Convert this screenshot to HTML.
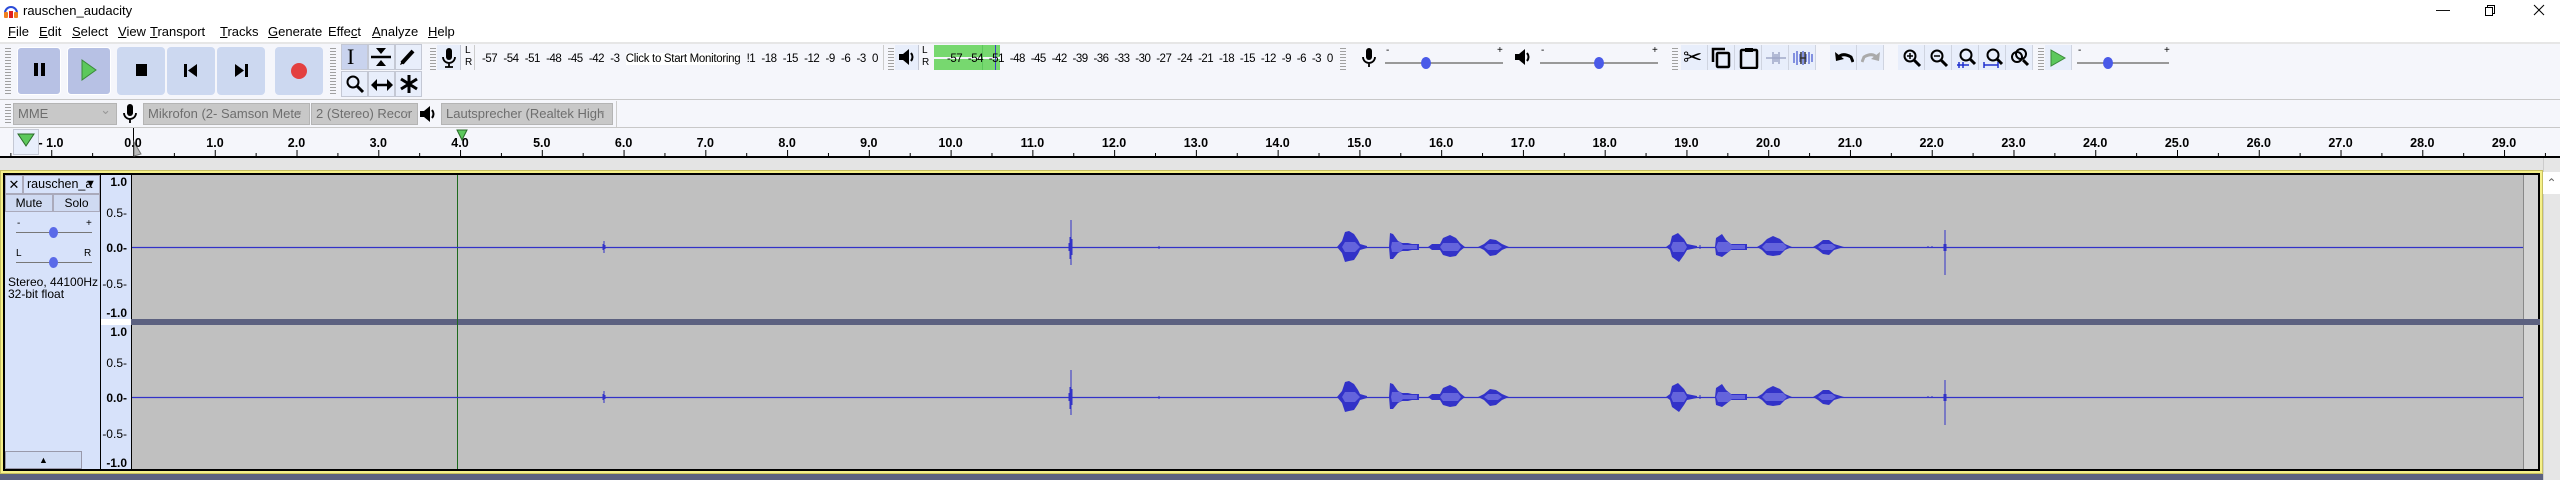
<!DOCTYPE html>
<html><head><meta charset="utf-8">
<style>
*{margin:0;padding:0;box-sizing:border-box}
body{width:2560px;height:480px;overflow:hidden;background:#fff;font-family:"Liberation Sans",sans-serif;position:relative}
.a{position:absolute}
.menu span{position:absolute;top:24px;font-size:13px;color:#000}
.tb{background:#f5f6fb}
.btn{position:absolute;background:#ccd8f0;border-radius:4px}
.btn.dn{background:#b7c1e4;border:1px solid #fff;box-shadow:inset 0 0 0 2px #b7c1e4}
.tool{position:absolute;width:27px;height:26px;background:#e8eefb;border:1px solid #c4c8d4}
.grip{position:absolute;width:6px;background:repeating-linear-gradient(#f5f6fb 0 2px,#a0a0a0 2px 3px)}
.dd{position:absolute;top:103px;height:22px;background:#c8c8c8;border:1px solid #b4b4b4;color:#6e6e6e;font-size:13px;line-height:20px;padding-left:4px;white-space:nowrap;overflow:hidden}
.dd:after{content:"⌄";position:absolute;right:5px;top:-4px;color:#999}
.eb{position:absolute;top:45px;width:27px;height:25px;background:#e8eefb;border-right:1px solid #cfd4e0}
.small{font-size:10px}
.mt{position:absolute;top:53px;display:flex;justify-content:space-between;font-size:11.5px;letter-spacing:-0.5px;white-space:nowrap}
</style></head><body>
<svg class="a" style="left:3px;top:3px" width="16" height="16" viewBox="0 0 16 16"><path d="M2 10 A6 6 0 0 1 14 10" stroke="#2b4bd8" stroke-width="2" fill="none"/><rect x="1" y="9" width="4" height="6" rx="1" fill="#f08020"/><rect x="11" y="9" width="4" height="6" rx="1" fill="#f08020"/><rect x="6" y="8" width="4" height="7" fill="#e02020"/></svg>
<div class="a" style="left:23px;top:3px;font-size:13px">rauschen_audacity</div>
<div class="a" style="left:2436px;top:1px;font-size:14px">—</div>
<svg class="a" style="left:2484px;top:4px" width="12" height="12"><rect x="1.5" y="3.5" width="7" height="8" fill="none" stroke="#000"/><path d="M3.5 3.5V1.5H10.5V9.5H8.5" fill="none" stroke="#000"/></svg>
<svg class="a" style="left:2533px;top:4px" width="12" height="12"><path d="M1 1L11 11M11 1L1 11" stroke="#000"/></svg>
<div class="menu">
<span style="left:8px"><u>F</u>ile</span><span style="left:39px"><u>E</u>dit</span><span style="left:72px"><u>S</u>elect</span><span style="left:118px"><u>V</u>iew</span><span style="left:150px"><u>T</u>ransport</span><span style="left:220px"><u>T</u>racks</span><span style="left:268px"><u>G</u>enerate</span><span style="left:328px">Effe<u>c</u>t</span><span style="left:372px"><u>A</u>nalyze</span><span style="left:428px"><u>H</u>elp</span>
</div>
<div class="a tb" style="left:0;top:42px;width:2560px;height:86px;border-top:2px solid #e6e6e6"></div>
<div class="a" style="left:0;top:99px;width:2560px;height:1px;background:#c8c8c8"></div>
<div class="a" style="left:0;top:127px;width:2560px;height:1px;background:#c8c8c8"></div>
<div class="grip" style="left:5px;top:46px;height:50px"></div>
<div class="btn dn" style="left:17px;top:47px;width:44px;height:48px"></div>
<div class="btn dn" style="left:67px;top:47px;width:44px;height:48px"></div>
<div class="btn" style="left:117px;top:47px;width:48px;height:48px"></div>
<div class="btn" style="left:167px;top:47px;width:48px;height:48px"></div>
<div class="btn" style="left:217px;top:47px;width:48px;height:48px"></div>
<div class="btn" style="left:275px;top:47px;width:48px;height:48px"></div>
<div class="a" style="left:34px;top:63px;width:4px;height:13px;background:#000"></div>
<div class="a" style="left:41px;top:63px;width:4px;height:13px;background:#000"></div>
<svg class="a" style="left:81px;top:59px" width="16" height="22"><path d="M1 1L15 11L1 21Z" fill="#5cc85c" stroke="#3a8a3a"/></svg>
<div class="a" style="left:136px;top:64px;width:11px;height:12px;background:#000"></div>
<svg class="a" style="left:184px;top:64px" width="14" height="13"><rect x="0" y="0" width="3" height="13"/><path d="M13 0L4 6.5L13 13Z"/></svg>
<svg class="a" style="left:235px;top:64px" width="14" height="13"><path d="M0 0L9 6.5L0 13Z"/><rect x="10" y="0" width="3" height="13"/></svg>
<div class="a" style="left:291px;top:63px;width:16px;height:16px;border-radius:50%;background:#e34040"></div>
<div class="grip" style="left:330px;top:46px;height:50px"></div>
<div class="tool" style="left:341px;top:44px;background:#c9d3ee"></div><div class="tool" style="left:368px;top:44px"></div><div class="tool" style="left:395px;top:44px"></div>
<div class="tool" style="left:341px;top:71px"></div><div class="tool" style="left:368px;top:71px"></div><div class="tool" style="left:395px;top:71px"></div>
<div class="a" style="left:347px;top:44px;font-size:22px;font-family:'Liberation Serif',serif">I</div>
<svg class="a" style="left:370px;top:47px" width="22" height="20"><path d="M6 1L16 1L11 7Z M6 19L16 19L11 13Z" fill="#000"/><path d="M1 10H21" stroke="#000" stroke-width="2.5"/></svg>
<svg class="a" style="left:399px;top:48px" width="18" height="18"><path d="M3 15L14 3" stroke="#000" stroke-width="4"/><path d="M1 17L3 12L6 15Z"/></svg>
<svg class="a" style="left:345px;top:74px" width="20" height="20"><circle cx="8" cy="8" r="5.5" fill="none" stroke="#000" stroke-width="2"/><path d="M12 12L18 18" stroke="#000" stroke-width="3"/></svg>
<svg class="a" style="left:371px;top:78px" width="22" height="14"><path d="M4 7H18" stroke="#000" stroke-width="2.5"/><path d="M0 7L6 1V13Z M22 7L16 1V13Z"/></svg>
<svg class="a" style="left:399px;top:74px" width="20" height="20"><path d="M10 1V19M2 5L18 15M18 5L2 15" stroke="#000" stroke-width="3"/></svg>
<!-- record meter -->
<div class="grip" style="left:430px;top:46px;height:24px"></div>
<div class="a" style="left:437px;top:45px;width:24px;height:25px;background:#e8eefb;border-right:1px solid #c4c8d4"></div>
<svg class="a" style="left:442px;top:48px" width="14" height="20"><rect x="4" y="0" width="6" height="12" rx="3"/><path d="M1 9A6 6 0 0 0 13 9M7 15V19M3 19H11" stroke="#000" stroke-width="1.8" fill="none"/></svg>
<div class="a small" style="left:465px;top:45px">L</div><div class="a small" style="left:465px;top:57px">R</div>
<div class="a" style="left:474px;top:45px;width:410px;height:25px;border-left:1px solid #ccc;border-right:1px solid #ccc"></div>
<div class="mt" style="left:482px;width:396px"><span>-57</span><span>-54</span><span>-51</span><span>-48</span><span>-45</span><span>-42</span><span>-3</span><span style="background:#fff;letter-spacing:-0.3px">Click to Start Monitoring</span><span>!1</span><span>-18</span><span>-15</span><span>-12</span><span>-9</span><span>-6</span><span>-3</span><span>0</span></div>
<div class="grip" style="left:888px;top:46px;height:24px"></div>
<!-- play meter -->
<div class="a" style="left:895px;top:45px;width:24px;height:25px;background:#e8eefb;border-right:1px solid #c4c8d4"></div>
<svg class="a" style="left:898px;top:48px" width="18" height="18"><path d="M1 6H5L11 1V17L5 12H1Z"/><path d="M13 5Q16 9 13 13" stroke="#000" stroke-width="2" fill="none"/></svg>
<div class="a small" style="left:922px;top:45px">L</div><div class="a small" style="left:922px;top:57px">R</div>
<div class="a" style="left:934px;top:45px;width:66px;height:25px;background:#77d86f"></div>
<div class="a" style="left:934px;top:57px;width:66px;height:2px;background:#f5f6fb"></div>
<div class="a" style="left:982px;top:45px;width:1px;height:25px;background:#5cc85c"></div>
<div class="a" style="left:995px;top:45px;width:1px;height:25px;background:#4040c8"></div>
<div class="mt" style="left:947px;width:386px"><span>-57</span><span>-54</span><span>-51</span><span>-48</span><span>-45</span><span>-42</span><span>-39</span><span>-36</span><span>-33</span><span>-30</span><span>-27</span><span>-24</span><span>-21</span><span>-18</span><span>-15</span><span>-12</span><span>-9</span><span>-6</span><span>-3</span><span>0</span></div>
<div class="grip" style="left:1340px;top:46px;height:24px"></div>
<!-- mixer -->
<svg class="a" style="left:1362px;top:48px" width="14" height="20"><rect x="4" y="0" width="6" height="12" rx="3"/><path d="M1 9A6 6 0 0 0 13 9M7 15V19" stroke="#000" stroke-width="1.8" fill="none"/></svg>
<div class="a" style="left:1385px;top:62px;width:118px;height:2px;background:#999"></div>
<div class="a small" style="left:1386px;top:45px">-</div><div class="a small" style="left:1497px;top:45px">+</div>
<div class="a" style="left:1421px;top:57px;width:10px;height:12px;border-radius:50%;background:#4a5ae8"></div>
<svg class="a" style="left:1514px;top:48px" width="18" height="18"><path d="M1 6H5L11 1V17L5 12H1Z"/><path d="M13 5Q16 9 13 13" stroke="#000" stroke-width="2" fill="none"/></svg>
<div class="a" style="left:1540px;top:62px;width:118px;height:2px;background:#999"></div>
<div class="a small" style="left:1541px;top:45px">-</div><div class="a small" style="left:1652px;top:45px">+</div>
<div class="a" style="left:1594px;top:57px;width:10px;height:12px;border-radius:50%;background:#4a5ae8"></div>
<div class="grip" style="left:1672px;top:46px;height:24px"></div>
<div class="eb" style="left:1681px"></div><div class="eb" style="left:1708px"></div><div class="eb" style="left:1735px"></div><div class="eb" style="left:1762px"></div><div class="eb" style="left:1789px"></div>
<div class="a" style="left:1683px;top:44px;font-size:23px">✂</div>
<svg class="a" style="left:1711px;top:47px" width="22" height="22"><path d="M2 15V2H14" stroke="#000" stroke-width="2.5" fill="none"/><rect x="6" y="6" width="12" height="14" rx="1" fill="none" stroke="#000" stroke-width="2.5"/></svg>
<svg class="a" style="left:1739px;top:47px" width="20" height="22"><rect x="2" y="3" width="16" height="18" rx="1" fill="none" stroke="#000" stroke-width="2.5"/><rect x="6" y="1" width="8" height="4" fill="#000"/></svg>
<svg class="a" style="left:1765px;top:49px" width="22" height="18"><path d="M1 9H21M8 3V15M14 3V15M10 5V13M12 5V13" stroke="#a0a8c8" stroke-width="1.5"/></svg>
<svg class="a" style="left:1792px;top:49px" width="22" height="18"><path d="M2 4V14M5 2V16M8 5V13M11 2V16M14 5V13M17 3V15M20 5V13" stroke="#6070d8" stroke-width="1.5"/><path d="M8 9H14M9 3V15M13 3V15" stroke="#333" stroke-width="1.5"/></svg>
<div class="eb" style="left:1830px"></div><div class="eb" style="left:1857px"></div>
<svg class="a" style="left:1834px;top:48px" width="20" height="18"><path d="M4 10Q8 4 17 9L19 14" stroke="#000" stroke-width="3" fill="none"/><path d="M1 4L2 13L10 11Z"/></svg>
<svg class="a" style="left:1861px;top:48px" width="20" height="18"><path d="M16 10Q12 4 3 9L1 14" stroke="#aaa" stroke-width="3" fill="none"/><path d="M19 4L18 13L10 11Z" fill="#aaa"/></svg>
<div class="eb" style="left:1898px"></div><div class="eb" style="left:1925px"></div><div class="eb" style="left:1952px"></div><div class="eb" style="left:1979px"></div><div class="eb" style="left:2006px"></div>
<svg class="a" style="left:1902px;top:48px" width="20" height="20"><circle cx="8" cy="8" r="5.5" fill="none" stroke="#000" stroke-width="2"/><path d="M12 12L18 18" stroke="#000" stroke-width="3"/><path d="M5 8H11M8 5V11" stroke="#000" stroke-width="1.5"/></svg>
<svg class="a" style="left:1929px;top:48px" width="20" height="20"><circle cx="8" cy="8" r="5.5" fill="none" stroke="#000" stroke-width="2"/><path d="M12 12L18 18" stroke="#000" stroke-width="3"/><path d="M5 8H11" stroke="#000" stroke-width="1.5"/></svg>
<svg class="a" style="left:1956px;top:47px" width="22" height="22"><circle cx="10" cy="8" r="5.5" fill="none" stroke="#000" stroke-width="2"/><path d="M14 12L19 17" stroke="#000" stroke-width="3"/><path d="M1 18H13M3 15V21M7 15V21" stroke="#2030d0" stroke-width="1.5"/></svg>
<svg class="a" style="left:1983px;top:47px" width="22" height="22"><circle cx="10" cy="8" r="5.5" fill="none" stroke="#000" stroke-width="2"/><path d="M14 12L19 17" stroke="#000" stroke-width="3"/><path d="M1 18H15M1 15V21M15 15V21" stroke="#2030d0" stroke-width="1.5"/></svg>
<svg class="a" style="left:2009px;top:47px" width="22" height="22"><circle cx="8" cy="10" r="5" fill="none" stroke="#000" stroke-width="2"/><circle cx="12" cy="7" r="5" fill="none" stroke="#000" stroke-width="2"/><path d="M14 13L19 18" stroke="#000" stroke-width="3"/></svg>
<div class="grip" style="left:2038px;top:46px;height:24px"></div>
<div class="eb" style="left:2045px"></div>
<svg class="a" style="left:2050px;top:49px" width="16" height="18"><path d="M1 1L15 9L1 17Z" fill="#5cc85c" stroke="#3a8a3a"/></svg>
<div class="a" style="left:2077px;top:62px;width:92px;height:2px;background:#999"></div>
<div class="a small" style="left:2078px;top:45px">-</div><div class="a small" style="left:2164px;top:45px">+</div>
<div class="a" style="left:2103px;top:57px;width:10px;height:12px;border-radius:50%;background:#4a5ae8"></div>
<!-- device toolbar -->
<div class="grip" style="left:5px;top:102px;height:22px"></div>
<div class="dd" style="left:13px;width:104px">MME</div>
<svg class="a" style="left:123px;top:104px" width="14" height="20"><rect x="4" y="0" width="6" height="12" rx="3"/><path d="M1 9A6 6 0 0 0 13 9M7 15V19" stroke="#000" stroke-width="1.8" fill="none"/></svg>
<div class="dd" style="left:143px;width:167px">Mikrofon (2- Samson Mete</div>
<div class="dd" style="left:311px;width:107px">2 (Stereo) Recor</div>
<svg class="a" style="left:419px;top:105px" width="18" height="18"><path d="M1 6H5L11 1V17L5 12H1Z"/><path d="M13 5Q16 9 13 13" stroke="#000" stroke-width="2" fill="none"/></svg>
<div class="dd" style="left:441px;width:172px">Lautsprecher (Realtek High</div>
<div class="a" style="left:616px;top:101px;width:1px;height:26px;background:#ccc"></div>
<!-- ruler -->
<div class="a" style="left:0;top:128px;width:2560px;height:30px;background:#f5f6fb;border-bottom:2px solid #000"></div>
<div class="a" style="left:13px;top:129px;width:26px;height:26px;background:#e8eefb;border:1px solid #c4c8d4"></div>
<svg class="a" style="left:17px;top:133px" width="18" height="14"><path d="M1 1H17L9 13Z" fill="#5cc85c" stroke="#2a6a2a"/></svg>
<svg class="a" style="left:0;top:128px" width="2560" height="30">
<defs><pattern id="tk" x="133" y="0" width="81.76" height="30" patternUnits="userSpaceOnUse"><path d="M0.5 22V29M41.38 25V29" stroke="#000"/></pattern></defs>
<rect x="0" y="0" width="2560" height="30" fill="url(#tk)"/>
<path d="M133.5 0V29" stroke="#000"/>
<path d="M457 2L467 2L462 12Z" fill="#5cc85c" stroke="#2a6a2a"/>
<path d="M134 14L141 26L134 28Z" fill="#bbb" stroke="#777"/>
<g font-family="Liberation Sans" font-weight="bold" font-size="12.5" text-anchor="middle" fill="#000">
<text x="51" y="19">- 1.0</text><text x="133" y="19">0.0</text><text x="215" y="19">1.0</text><text x="296.5" y="19">2.0</text><text x="378.3" y="19">3.0</text><text x="460" y="19">4.0</text><text x="541.8" y="19">5.0</text><text x="623.6" y="19">6.0</text><text x="705.3" y="19">7.0</text><text x="787.1" y="19">8.0</text><text x="868.8" y="19">9.0</text><text x="950.6" y="19">10.0</text><text x="1032.4" y="19">11.0</text><text x="1114.1" y="19">12.0</text><text x="1195.9" y="19">13.0</text><text x="1277.6" y="19">14.0</text><text x="1359.4" y="19">15.0</text><text x="1441.2" y="19">16.0</text><text x="1522.9" y="19">17.0</text><text x="1604.7" y="19">18.0</text><text x="1686.4" y="19">19.0</text><text x="1768.2" y="19">20.0</text><text x="1850" y="19">21.0</text><text x="1931.7" y="19">22.0</text><text x="2013.5" y="19">23.0</text><text x="2095.2" y="19">24.0</text><text x="2177" y="19">25.0</text><text x="2258.8" y="19">26.0</text><text x="2340.5" y="19">27.0</text><text x="2422.3" y="19">28.0</text><text x="2504" y="19">29.0</text>
</g></svg>
<!-- track area -->
<div class="a" style="left:0;top:158px;width:2543px;height:13px;background:#e4e4e4"></div>
<div class="a" style="left:2543px;top:158px;width:17px;height:322px;background:#e6e6e6;border-left:1px solid #ccc"></div>
<div class="a" style="left:2543px;top:172px;width:17px;height:22px;background:#fff;font-size:12px;text-align:center;color:#666;line-height:22px">⌃</div>
<div class="a" style="left:0;top:470px;width:2543px;height:10px;background:#5c6180"></div>
<div class="a" style="left:0;top:170px;width:2543px;height:304px;background:#f5f08a;border:1px solid #c8c060"></div>
<div class="a" style="left:3px;top:173px;width:2537px;height:298px;background:#000"></div>
<!-- track panel -->
<div class="a" style="left:5px;top:175px;width:95px;height:294px;background:#d7e2fa"></div>
<div class="a" style="left:5px;top:175px;width:18px;height:19px;border:1px solid #aab;font-size:13px;text-align:center;line-height:17px">✕</div>
<div class="a" style="left:23px;top:175px;width:77px;height:19px;border:1px solid #aab;font-size:12.5px;line-height:17px;padding-left:3px">rauschen_a<span style="position:absolute;right:3px;font-size:11px">▼</span></div>
<div class="a" style="left:5px;top:194px;width:48px;height:18px;border:1px solid #aab;font-size:12px;text-align:center;line-height:16px;background:#cfdaf2">Mute</div>
<div class="a" style="left:53px;top:194px;width:47px;height:18px;border:1px solid #aab;font-size:12px;text-align:center;line-height:16px;background:#cfdaf2">Solo</div>
<div class="a small" style="left:17px;top:218px">-</div><div class="a small" style="left:86px;top:218px">+</div>
<div class="a" style="left:16px;top:232px;width:76px;height:1px;background:#777"></div>
<div class="a" style="left:49px;top:227px;width:9px;height:11px;border-radius:50%;background:#5a6ae8"></div>
<div class="a small" style="left:16px;top:248px">L</div><div class="a small" style="left:84px;top:248px">R</div>
<div class="a" style="left:16px;top:262px;width:76px;height:1px;background:#777"></div>
<div class="a" style="left:49px;top:257px;width:9px;height:11px;border-radius:50%;background:#5a6ae8"></div>
<div class="a" style="left:8px;top:276px;font-size:12px;line-height:12px">Stereo, 44100Hz<br>32-bit float</div>
<div class="a" style="left:5px;top:451px;width:77px;height:18px;background:#d0dcf4;border:1px solid #99a;font-size:9px;text-align:center;line-height:16px">▲</div>
<!-- vertical rulers -->
<div class="a" style="left:101px;top:175px;width:30px;height:144px;background:#d7e2fa"></div>
<div class="a" style="left:101px;top:325px;width:30px;height:144px;background:#d7e2fa"></div>
<div class="a" style="left:101px;top:319px;width:30px;height:6px;background:#fff"></div>
<div class="a" style="left:131px;top:319px;width:2409px;height:6px;background:#5c6180"></div>
<svg class="a" style="left:101px;top:175px" width="31" height="294"><g font-family="Liberation Sans" font-size="12" text-anchor="end">
<text x="26" y="11" font-weight="bold">1.0</text><text x="26" y="42">0.5-</text><text x="26" y="77" font-weight="bold">0.0-</text><text x="26" y="113">-0.5-</text><text x="26" y="142" font-weight="bold">-1.0</text>
<text x="26" y="161" font-weight="bold">1.0</text><text x="26" y="192">0.5-</text><text x="26" y="227" font-weight="bold">0.0-</text><text x="26" y="263">-0.5-</text><text x="26" y="292" font-weight="bold">-1.0</text></g></svg>
<!-- waveforms -->
<div class="a" style="left:132px;top:175px;width:2391px;height:144px;background:#c0c0c0"></div>
<div class="a" style="left:132px;top:325px;width:2391px;height:144px;background:#c0c0c0"></div>
<div class="a" style="left:2523px;top:175px;width:15px;height:144px;background:#d4d4d4;border-left:1px solid #888"></div>
<div class="a" style="left:2523px;top:325px;width:15px;height:144px;background:#d4d4d4;border-left:1px solid #888"></div>
<div class="a" style="left:457px;top:175px;width:1px;height:294px;background:#1e6a1e"></div>
<svg class="a" style="left:0;top:0" width="2560" height="480">
<defs><g id="w">
<path d="M132 0.5H2523" stroke="#3232c8" stroke-width="1.2"/>
<path d="M604 -6V6M603 -3V3M605 -2V2" stroke="#3232c8"/>
<path d="M1071 -27V18M1070 -10V12M1072 -8V8M1069 -4V4" stroke="#3232c8"/>
<path d="M1159 -1V2" stroke="#3232c8"/>
<path d="M1337 0L1342 -6L1345 -15L1349 -16L1354 -13L1358 -7L1360 -3L1367 -1V1L1360 3L1358 7L1354 13L1349 14L1345 15L1342 6Z" fill="#3232c8"/>
<path d="M1342 0L1345 -5L1355 -5L1360 0L1355 5L1345 5Z" fill="#6464dc"/>
<path d="M1389 0L1390 -14L1393 -13L1398 -6L1402 -4H1408L1412 -3H1419V3H1412L1408 4H1402L1398 6L1393 12L1390 12Z" fill="#3232c8"/>
<path d="M1391 0L1392 -5H1400L1403 -2H1417V2H1403L1400 5H1392Z" fill="#6464dc"/>
<path d="M1428 0L1432 -3L1440 -3L1443 -9L1450 -12L1456 -9L1460 -4L1465 0L1460 4L1456 9L1450 10L1443 8L1440 3L1432 3Z" fill="#3232c8"/>
<path d="M1440 0L1443 -4H1458L1461 0L1458 4H1443Z" fill="#6464dc"/>
<path d="M1478 0L1484 -3L1490 -8L1496 -7L1502 -3L1509 0L1502 3L1496 8L1490 9L1484 3Z" fill="#3232c8"/>
<path d="M1484 0L1488 -3H1498L1502 0L1498 3H1488Z" fill="#6464dc"/>
<path d="M1666 0L1670 -3L1672 -11L1678 -14L1684 -8L1687 -3L1697 -1V1L1687 3L1684 8L1679 15L1672 10L1670 3Z" fill="#3232c8"/>
<path d="M1671 0L1673 -5H1684L1687 0L1684 5H1673Z" fill="#6464dc"/>
<path d="M1700 -2V2" stroke="#3232c8"/>
<path d="M1715 0L1716 -9L1722 -13L1726 -7L1731 -3H1747V3H1731L1726 7L1722 10L1716 8Z" fill="#3232c8"/>
<path d="M1716 0L1718 -5H1728L1732 -2H1745V2H1732L1728 5H1718Z" fill="#6464dc"/>
<path d="M1757 0L1762 -3L1767 -8L1773 -11L1780 -8L1785 -3L1792 0L1785 3L1780 8L1773 9L1767 8L1762 3Z" fill="#3232c8"/>
<path d="M1762 0L1766 -4H1783L1787 0L1783 4H1766Z" fill="#6464dc"/>
<path d="M1813 0L1818 -3L1823 -7L1829 -7L1834 -3L1844 0L1834 3L1829 8L1823 7L1818 3Z" fill="#3232c8"/>
<path d="M1818 0L1822 -3H1832L1836 0L1832 3H1822Z" fill="#6464dc"/>
<path d="M1945 -17V28M1944 -3V4M1946 -3V4M1928 -1V1M1932 -1V1" stroke="#3232c8"/>
</g></defs>
<use href="#w" transform="translate(0,247)"/>
<use href="#w" transform="translate(0,397)"/>
</svg>
</body></html>
